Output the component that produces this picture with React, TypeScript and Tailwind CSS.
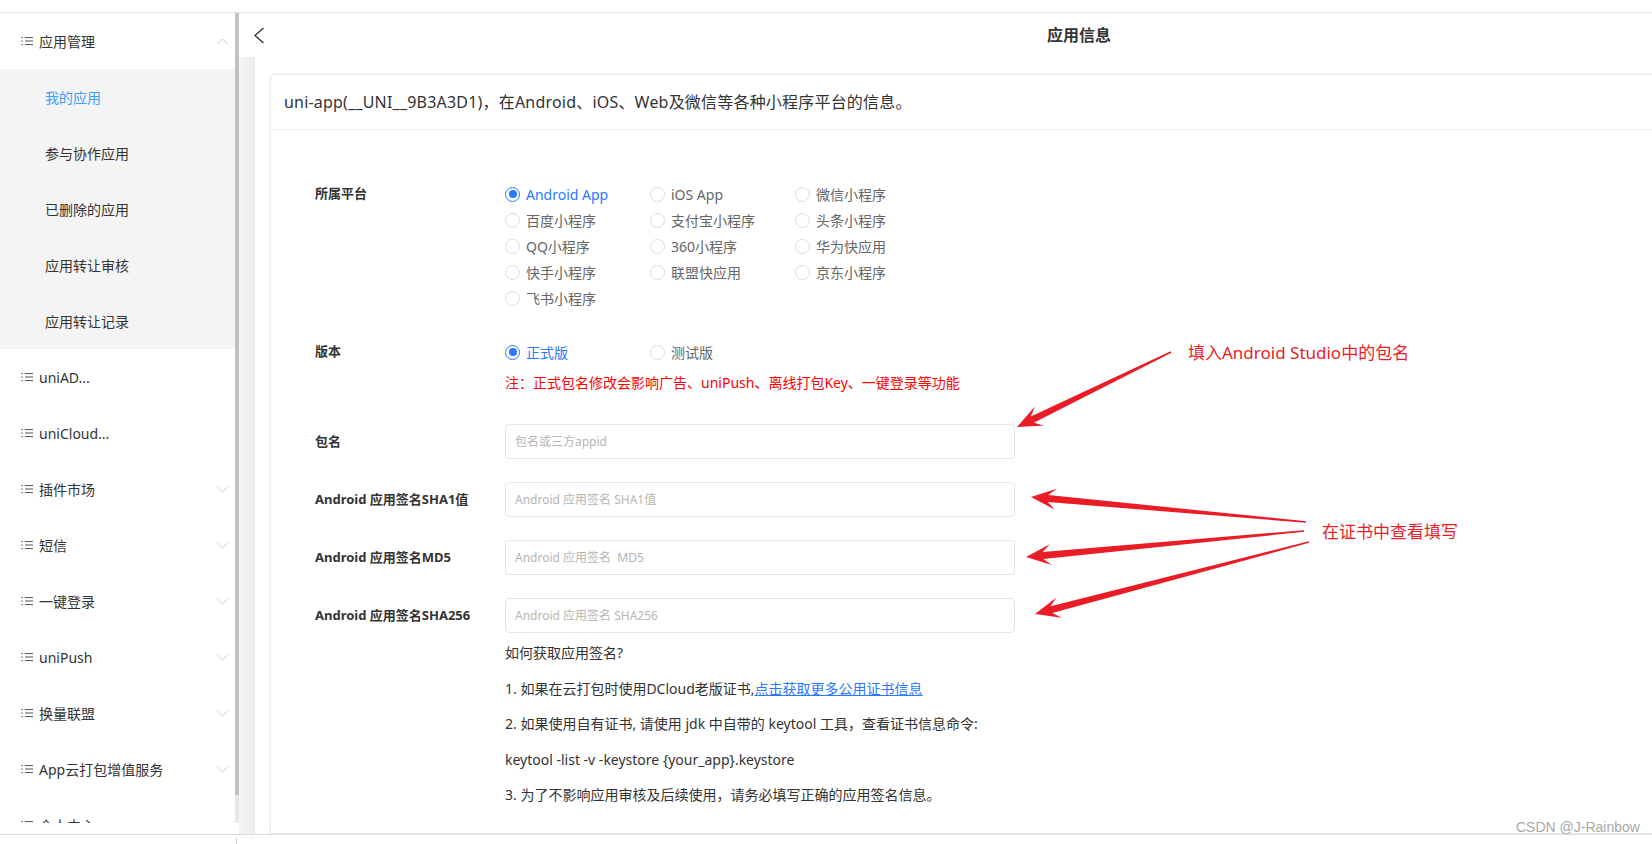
import React from 'react';

const subMenus = ['我的应用', '参与协作应用', '已删除的应用', '应用转让审核', '应用转让记录'];

const menus: { label: string; chevron: boolean }[] = [
  { label: 'uniAD...', chevron: false },
  { label: 'uniCloud...', chevron: false },
  { label: '插件市场', chevron: true },
  { label: '短信', chevron: true },
  { label: '一键登录', chevron: true },
  { label: 'uniPush', chevron: true },
  { label: '换量联盟', chevron: true },
  { label: 'App云打包增值服务', chevron: true },
  { label: '个人中心', chevron: true },
];

const platforms = [
  'Android App', 'iOS App', '微信小程序',
  '百度小程序', '支付宝小程序', '头条小程序',
  'QQ小程序', '360小程序', '华为快应用',
  '快手小程序', '联盟快应用', '京东小程序',
  '飞书小程序',
];

function ListIcon() {
  return (
    <svg width="13" height="10" viewBox="0 0 13 10" fill="none" stroke="#555" strokeWidth="1">
      <path d="M0.5 1.5h1.5M0.5 5h1.5M0.5 8.5h1.5M4 1.5h8M4 5h8M4 8.5h8" />
    </svg>
  );
}

function Chevron({ up }: { up?: boolean }) {
  return (
    <svg width="11" height="7" viewBox="0 0 11 7" fill="none" stroke="#c8c8c8" strokeWidth="1">
      <path d={up ? 'M0.5 6L5.5 1L10.5 6' : 'M0.5 1L5.5 6L10.5 1'} />
    </svg>
  );
}

function MenuItem({ label, chevron }: { label: string; chevron?: 'up' | 'down' }) {
  return (
    <div className="h-[56px] flex items-center pl-[21px] pr-[7px] text-[14px] text-[#333]">
      <ListIcon />
      <span className="ml-[5px]">{label}</span>
      {chevron && (
        <span className="ml-auto flex">
          <Chevron up={chevron === 'up'} />
        </span>
      )}
    </div>
  );
}

function Radio({ checked, label }: { checked?: boolean; label: string }) {
  return (
    <div className="h-[26px] flex items-center">
      <span
        className={
          checked
            ? 'w-[15px] h-[15px] rounded-full border border-[#2979ff] flex items-center justify-center bg-white'
            : 'w-[15px] h-[15px] rounded-full border border-[#dcdcdc] bg-white'
        }
      >
        {checked && <span className="w-[8px] h-[8px] rounded-full bg-[#2979ff]" />}
      </span>
      <span className={checked ? 'ml-[6px] text-[14px] text-[#2979ff]' : 'ml-[6px] text-[14px] text-[#666]'}>
        {label}
      </span>
    </div>
  );
}

function InputRow({ label, placeholder }: { label: string; placeholder: string }) {
  return (
    <div className="flex items-center">
      <div className="w-[190px] shrink-0 text-[13px] font-bold text-[#333]">{label}</div>
      <div className="w-[510px] h-[35px] border border-[#e5e5e5] rounded-[4px] flex items-center pl-[9px] text-[12px] text-[#b5b5b5] whitespace-pre">
        {placeholder}
      </div>
    </div>
  );
}

function arrow(tx: number, ty: number, hx: number, hy: number) {
  const dx = hx - tx;
  const dy = hy - ty;
  const len = Math.hypot(dx, dy);
  const ux = dx / len;
  const uy = dy / len;
  const nx = -uy;
  const ny = ux;
  const p = (along: number, off: number) =>
    `${(hx - ux * along + nx * off).toFixed(1)},${(hy - uy * along + ny * off).toFixed(1)}`;
  const t = (off: number) => `${(tx + nx * off).toFixed(1)},${(ty + ny * off).toFixed(1)}`;
  return [t(0.8), p(17, 3.5), p(25, 10.5), p(0, 0), p(25, -10.5), p(17, -3.5), t(-0.8)].join(' ');
}

export default function App() {
  return (
    <div className="relative w-[1652px] h-[844px] overflow-hidden bg-white font-['Noto_Sans','Noto_Sans_CJK_SC',sans-serif] flex flex-col">
      <div className="h-[13px] shrink-0 border-b border-[#e6e6e6]" />

      <div className="h-[821px] shrink-0 flex overflow-hidden">
        {/* sidebar */}
        <div className="w-[235px] shrink-0">
          <div className="h-[810px] overflow-hidden">
            <MenuItem label="应用管理" chevron="up" />
            <div className="bg-[#f4f4f4]">
              {subMenus.map((s, i) => (
                <div
                  key={s}
                  className={
                    i === 0
                      ? 'h-[56px] flex items-center pl-[45px] text-[14px] text-[#409eff]'
                      : 'h-[56px] flex items-center pl-[45px] text-[14px] text-[#333]'
                  }
                >
                  {s}
                </div>
              ))}
            </div>
            {menus.map((m) => (
              <MenuItem key={m.label} label={m.label} chevron={m.chevron ? 'down' : undefined} />
            ))}
          </div>
        </div>

        {/* scrollbar */}
        <div className="w-[4px] shrink-0 flex flex-col">
          <div className="h-[782px] bg-[#c1c1c1]" />
          <div className="h-[28px] bg-[#e8e8e8]" />
        </div>

        {/* main */}
        <div className="w-[1680px] shrink-0 flex flex-col">
          <div className="h-[44px] shrink-0 grid grid-cols-[1fr_auto_1fr] items-center">
            <div className="pl-[14px] flex">
              <svg width="12" height="17" viewBox="0 0 12 17" fill="none" stroke="#333" strokeWidth="1.3">
                <path d="M10.5 1L2 8.5L10.5 16" />
              </svg>
            </div>
            <div className="text-[16px] font-bold text-[#333]">应用信息</div>
            <div />
          </div>

          <div className="flex-1 flex">
            <div className="w-[16px] shrink-0 bg-gradient-to-r from-[#f5f5f5] to-[#ececec]" />
            <div className="flex-1 pl-[15px] pr-[15px] pt-[17px]">
              <div className="h-full bg-white border border-[#ebebeb] rounded-t-[4px] shadow-[0_0_4px_rgba(0,0,0,0.05)]">
                <div className="h-[55px] border-b border-[#eeeeee] flex items-center pl-[13px] text-[16px] tracking-[0.2px] text-[#333]">
                  uni-app(__UNI__9B3A3D1)，在Android、iOS、Web及微信等各种小程序平台的信息。
                </div>

                <div className="pl-[44px] pt-[51px]">
                  <div className="flex">
                    <div className="w-[190px] shrink-0 h-[26px] flex items-center text-[13px] font-bold text-[#333]">
                      所属平台
                    </div>
                    <div className="grid grid-cols-[145px_145px_145px]">
                      {platforms.map((p, i) => (
                        <Radio key={p} label={p} checked={i === 0} />
                      ))}
                    </div>
                  </div>

                  <div className="flex mt-[28px]">
                    <div className="w-[190px] shrink-0 h-[26px] flex items-center text-[13px] font-bold text-[#333]">
                      版本
                    </div>
                    <div className="flex flex-col">
                      <div className="grid grid-cols-[145px_145px]">
                        <Radio label="正式版" checked />
                        <Radio label="测试版" />
                      </div>
                      <div className="mt-[8px] leading-[20px] text-[14px] text-[#f00]">
                        注：正式包名修改会影响广告、uniPush、离线打包Key、一键登录等功能
                      </div>
                    </div>
                  </div>

                  <div className="mt-[31px] flex flex-col gap-[23px]">
                    <InputRow label="包名" placeholder="包名或三方appid" />
                    <InputRow label="Android 应用签名SHA1值" placeholder="Android 应用签名 SHA1值" />
                    <InputRow label="Android 应用签名MD5" placeholder="Android 应用签名  MD5" />
                    <InputRow label="Android 应用签名SHA256" placeholder="Android 应用签名 SHA256" />
                  </div>

                  <div className="ml-[190px] mt-[9px] flex flex-col gap-[14.5px] text-[14px] leading-[21px] text-[#333]">
                    <p>如何获取应用签名?</p>
                    <p>
                      1. 如果在云打包时使用DCloud老版证书,
                      <span className="text-[#2979ff] underline">点击获取更多公用证书信息</span>
                    </p>
                    <p>2. 如果使用自有证书, 请使用 jdk 中自带的 keytool 工具，查看证书信息命令:</p>
                    <p>keytool -list -v -keystore {'{your_app}'}.keystore</p>
                    <p>3. 为了不影响应用审核及后续使用，请务必填写正确的应用签名信息。</p>
                  </div>
                </div>
              </div>
            </div>
          </div>
        </div>
      </div>

      <div className="relative h-[10px] shrink-0 border-t border-[#dcdcdc]">
        <div className="absolute left-[236px] top-[3px] w-[1px] h-[7px] bg-[#c8c8c8]" />
      </div>

      {/* annotations */}
      <svg className="absolute left-0 top-0 pointer-events-none" width="1652" height="844">
        <polygon points={arrow(1171, 352, 1017, 427)} fill="#ea1c26" />
        <polygon points={arrow(1306, 522, 1031, 497)} fill="#ea1c26" />
        <polygon points={arrow(1304, 531, 1026, 557)} fill="#ea1c26" />
        <polygon points={arrow(1309, 542, 1035, 614)} fill="#ea1c26" />
      </svg>
      <div className="absolute left-[1188px] top-[341px] leading-[24px] text-[17px] text-[#ea1c26]">
        填入Android Studio中的包名
      </div>
      <div className="absolute left-[1322px] top-[520px] leading-[24px] text-[17px] text-[#ea1c26]">
        在证书中查看填写
      </div>
      <div className="absolute left-[1516px] top-[819px] leading-[16px] text-[14px] text-[#a8a8a8] font-['Liberation_Sans',sans-serif]">
        CSDN @J-Rainbow
      </div>
    </div>
  );
}
